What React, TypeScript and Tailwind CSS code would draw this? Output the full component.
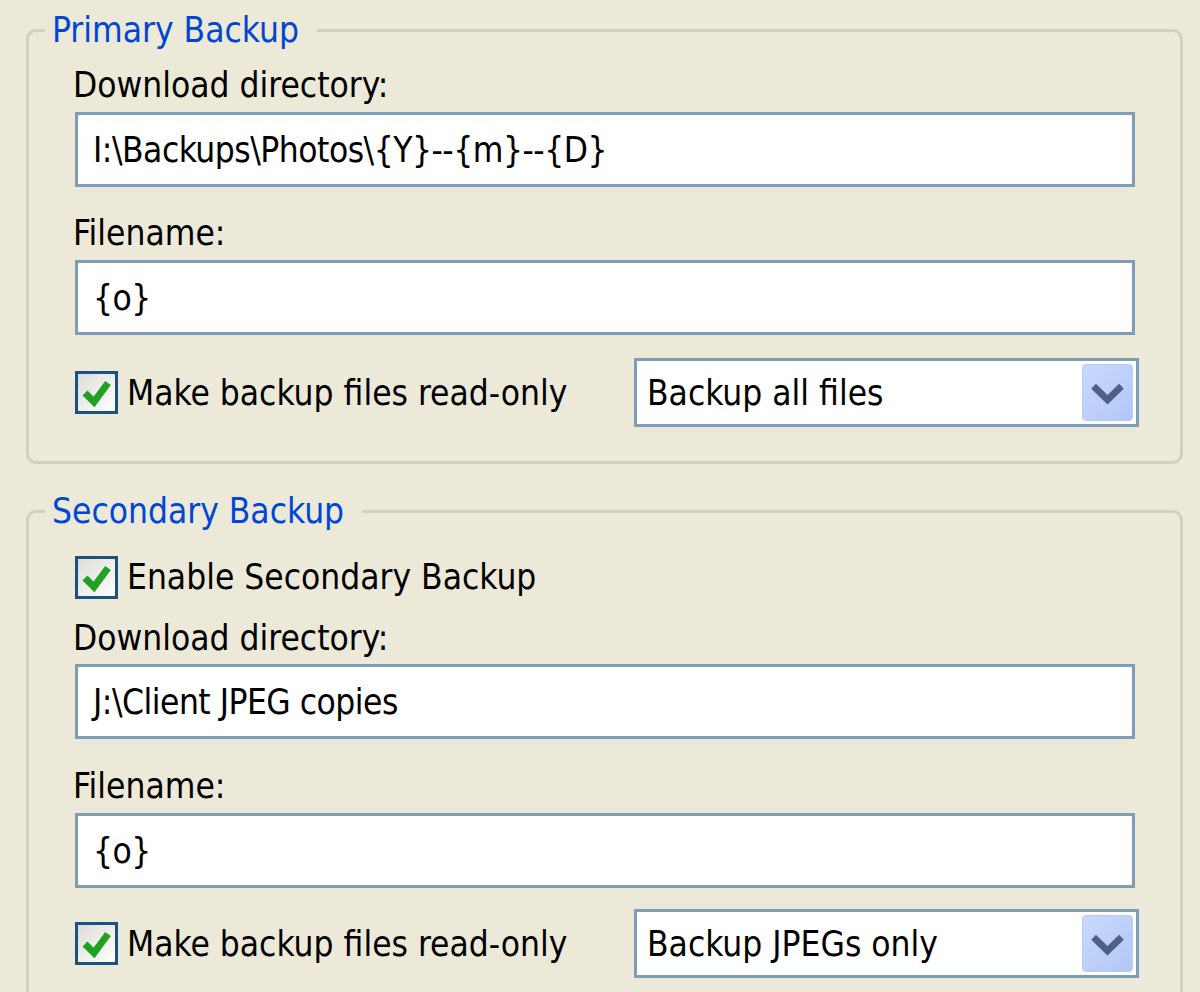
const FONT = 'font-["DejaVu_Sans_Condensed","DejaVu_Sans",Tahoma,sans-serif]'

function CheckBox() {
  return (
    <div className="w-[43px] h-[43px] shrink-0 border-[3px] border-[#1c5180] bg-gradient-to-br from-[#dcdcd7] to-white">
      <svg width="37" height="37" viewBox="0 0 37 37">
        <path d="M7 19 L16 28 L30 9" fill="none" stroke="#21a121" strokeWidth="7" strokeLinejoin="miter" strokeLinecap="butt" />
      </svg>
    </div>
  )
}

function CheckRow({ label }: { label: string }) {
  return (
    <div className="flex items-center gap-[9px]">
      <CheckBox />
      <span className="text-[35px] leading-[40px] text-black whitespace-nowrap">{label}</span>
    </div>
  )
}

function TextBox({ value, className = '' }: { value: string; className?: string }) {
  return (
    <div className={`h-[75px] border-[3px] border-[#7f9db9] bg-white flex items-center pl-[15px] ${className}`}>
      <span className="text-[35px] leading-[40px] text-black whitespace-nowrap tracking-[-0.5px]">{value}</span>
    </div>
  )
}

function Label({ text, className = '' }: { text: string; className?: string }) {
  return <div className={`h-[40px] text-[35px] leading-[40px] text-black -ml-[2px] ${className}`}>{text}</div>
}

function ComboBox({ value }: { value: string }) {
  return (
    <div className="w-[505px] h-[69px] -mr-[4px] border-[3px] border-[#7f9db9] bg-white flex items-stretch p-[3px]">
      <div className="flex-1 flex items-center pl-[7px]">
        <span className="text-[35px] leading-[40px] text-black whitespace-nowrap">{value}</span>
      </div>
      <div className="w-[51px] rounded-[4px] border border-[#b9cbf3] bg-gradient-to-br from-[#c9d9fc] to-[#b2c7f7] flex items-center justify-center">
        <svg width="51" height="57" viewBox="0 0 51 57">
          <path d="M11 22 L25.5 36 L40 22" fill="none" stroke="#4d6185" strokeWidth="7" />
        </svg>
      </div>
    </div>
  )
}

function Group({ title, className = '', children }: { title: string; className?: string; children: React.ReactNode }) {
  return (
    <fieldset className={`ml-[26px] w-[1157px] border-[3px] border-[#d0d0bf] rounded-[10px] ${className}`}>
      <legend className="ml-[16px] pl-[7px] pr-[18px] text-[35px] leading-[40px] text-[#0046d5]">{title}</legend>
      {children}
    </fieldset>
  )
}

export default function App() {
  return (
    <div className={`w-[1200px] h-[992px] overflow-hidden bg-[#ece9d8] pt-[10px] ${FONT}`}>
      <Group title="Primary Backup">
        <div className="pl-[46px] pr-[45px] pt-[15px] pb-[34px] flex flex-col">
          <Label text="Download directory:" />
          <TextBox className="mt-[7px]" value={'I:\\Backups\\Photos\\{Y}--{m}--{D}'} />
          <Label className="mt-[26px]" text="Filename:" />
          <TextBox className="mt-[7px]" value="{o}" />
          <div className="mt-[23px] flex items-center justify-between">
            <CheckRow label="Make backup files read-only" />
            <ComboBox value="Backup all files" />
          </div>
        </div>
      </Group>

      <Group title="Secondary Backup" className="mt-[27px]">
        <div className="pl-[46px] pr-[45px] pt-[25px] pb-[34px] flex flex-col">
          <div className="h-[42px] flex items-center">
            <CheckRow label="Enable Secondary Backup" />
          </div>
          <Label className="mt-[20px]" text="Download directory:" />
          <TextBox className="mt-[6px]" value={'J:\\Client JPEG copies'} />
          <Label className="mt-[27px]" text="Filename:" />
          <TextBox className="mt-[7px]" value="{o}" />
          <div className="mt-[21px] flex items-center justify-between">
            <CheckRow label="Make backup files read-only" />
            <ComboBox value="Backup JPEGs only" />
          </div>
        </div>
      </Group>
    </div>
  )
}
